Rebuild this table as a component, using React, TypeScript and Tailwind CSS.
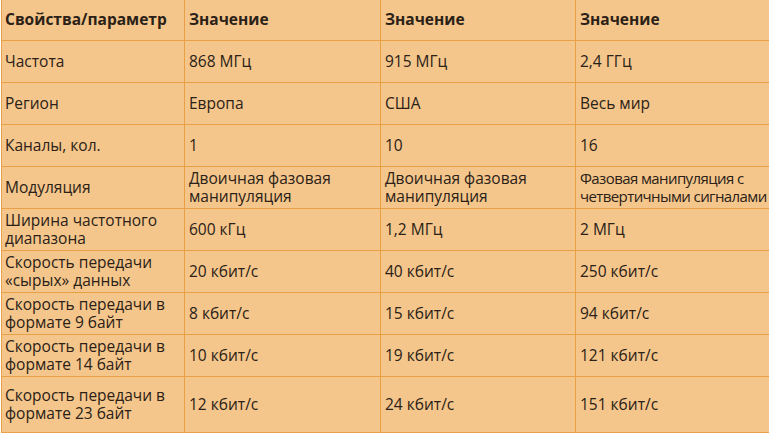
import React from "react";

const rows: string[][] = [
  ["Частота", "868 МГц", "915 МГц", "2,4 ГГц"],
  ["Регион", "Европа", "США", "Весь мир"],
  ["Каналы, кол.", "1", "10", "16"],
  [
    "Модуляция",
    "Двоичная фазовая\nманипуляция",
    "Двоичная фазовая\nманипуляция",
    "Фазовая манипуляция с\nчетвертичными сигналами",
  ],
  ["Ширина частотного\nдиапазона", "600 кГц", "1,2 МГц", "2 МГц"],
  ["Скорость передачи\n«сырых» данных", "20 кбит/с", "40 кбит/с", "250 кбит/с"],
  ["Скорость передачи в\nформате 9 байт", "8 кбит/с", "15 кбит/с", "94 кбит/с"],
  ["Скорость передачи в\nформате 14 байт", "10 кбит/с", "19 кбит/с", "121 кбит/с"],
  ["Скорость передачи в\nформате 23 байт", "12 кбит/с", "24 кбит/с", "151 кбит/с"],
];

const header = ["Свойства/параметр", "Значение", "Значение", "Значение"];

function Cell({
  text,
  col,
  bold,
  tight,
}: {
  text: string;
  col: number;
  bold?: boolean;
  tight?: boolean;
}) {
  const lines = text.split("\n");
  return (
    <div
      className={
        "flex flex-col justify-center border-b-[1.5px] border-r-[1.5px] border-[#e99f44] leading-[17.5px] whitespace-nowrap " +
        (col === 0 ? "border-l-[1.5px] pl-[3px] " : "pl-[4px] ") +
        (bold ? "font-bold " : "") +
        (tight ? "text-[15px] tracking-[-0.6px]" : "")
      }
    >
      {lines.map((l, i) => (
        <span key={i}>{l}</span>
      ))}
    </div>
  );
}

export default function App() {
  return (
    <div className="w-[769px] h-[441px] bg-white overflow-hidden">
      <div
        className="ml-[1px] w-[780px] grid grid-cols-[184px_196px_195px_205px] grid-rows-[41px_42px_42px_42px_42px_42px_42px_42px_42px_56px] bg-[#f4c68c] text-[#2b2116] text-[15.5px]"
        style={{ fontFamily: '"Open Sans", "Noto Sans", sans-serif' }}
      >
        {header.map((h, i) => (
          <Cell key={"h" + i} text={h} col={i} bold />
        ))}
        {rows.map((r, ri) =>
          r.map((c, ci) => (
            <Cell key={ri + "-" + ci} text={c} col={ci} tight={ri === 3 && ci === 3} />
          ))
        )}
      </div>
    </div>
  );
}
